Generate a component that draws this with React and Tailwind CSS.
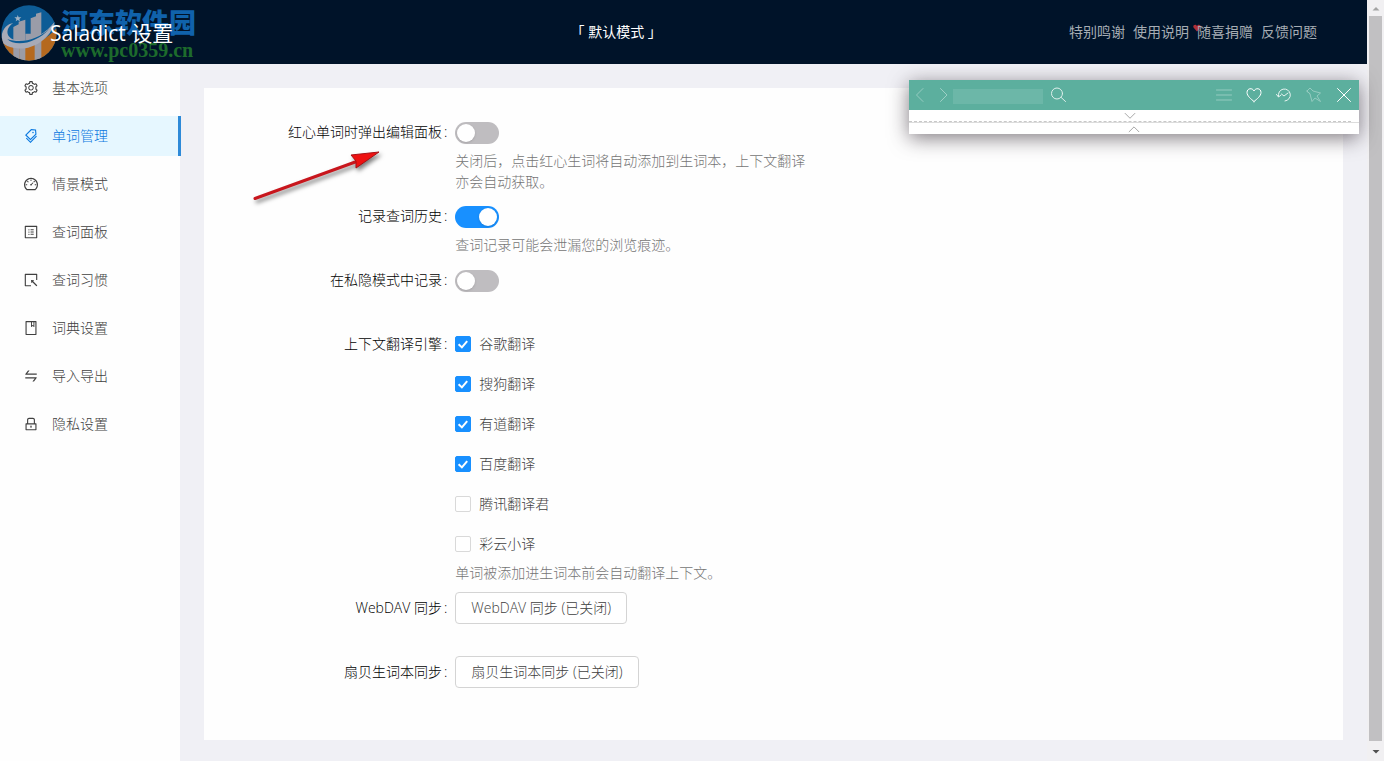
import React, { useState } from "react";
import {
  AiOutlineSetting,
  AiOutlineTags,
  AiOutlineDashboard,
  AiOutlineProfile,
  AiOutlineSelect,
  AiOutlineBook,
  AiOutlineSwap,
  AiOutlineLock,
} from "react-icons/ai";

const menu = [
  { label: "基本选项", Icon: AiOutlineSetting },
  { label: "单词管理", Icon: AiOutlineTags, active: true },
  { label: "情景模式", Icon: AiOutlineDashboard },
  { label: "查词面板", Icon: AiOutlineProfile },
  { label: "查词习惯", Icon: AiOutlineSelect },
  { label: "词典设置", Icon: AiOutlineBook },
  { label: "导入导出", Icon: AiOutlineSwap },
  { label: "隐私设置", Icon: AiOutlineLock },
];

const engines = [
  ["谷歌翻译", true],
  ["搜狗翻译", true],
  ["有道翻译", true],
  ["百度翻译", true],
  ["腾讯翻译君", false],
  ["彩云小译", false],
];

function Watermark() {
  return (
    <div className="pointer-events-none absolute left-0 top-0.5 flex items-center gap-[3px]" aria-hidden="true">
      <svg className="size-[58px] shrink-0" viewBox="0 0 174 174">
        <defs>
          <clipPath id="disc">
            <circle cx="87" cy="90" r="83" />
          </clipPath>
        </defs>
        <g clipPath="url(#disc)">
          <rect width="174" height="174" fill="#0d5c96" />
          <path d="M0 104C40 150 120 136 174 70V174H0Z" fill="#b5691f" />
          <path d="M40 72L56 64V56L76 50V174H58V136H40Z M92 46L108 40V32L124 28V174H104V112L92 116Z" fill="#9a9ca8" />
          <path d="M40 130H58V174H40Z" fill="#9a9ca8" />
          <path d="M76 92H104V112H76Z" fill="#9a9ca8" />
          <path d="M4 106C6 72 26 62 40 60C14 76 16 108 52 112C98 116 136 92 164 56C152 112 92 142 50 136C20 132 4 122 4 106Z" fill="#a8aab6" />
          <path d="M22 108C44 132 108 124 150 76C112 112 60 122 22 108Z" fill="#0d5c96" />
          <path d="M53 36l3 7 8 0-6 5 2 7-7-4-6 4 2-7-6-5 8 0z" fill="#9fb2c4" />
        </g>
      </svg>
      <div className="whitespace-nowrap pt-1">
        <div className="font-['Noto_Sans_CJK_SC',sans-serif] text-[27px] leading-8 font-black text-[#1062ab]">河东软件园</div>
        <div className="font-['Liberation_Serif',serif] text-[20px] leading-6 font-bold text-[#1d6b2c]">www.pc0359.cn</div>
      </div>
    </div>
  );
}

function Header() {
  return (
    <header className="relative flex h-16 items-center justify-between bg-[#001329] px-[50px]">
      <Watermark />
      <h1 className="relative pt-0.5 text-[21px] text-white"><span className="font-medium">Saladict</span> 设置</h1>
      <button type="button" className="mr-2.5 whitespace-pre text-sm text-white">「 默认模式 」</button>
      <nav className="flex gap-2 text-sm text-[#a6adb4]">
        <a href="#thanks">特别鸣谢</a>
        <a href="#manual">使用说明</a>
        <a href="#donate" className="relative">
          <svg className="absolute top-0.5 -left-1 size-2" viewBox="0 0 16 16">
            <path d="M8 15L1 7C-1 2 5-1 8 4C11-1 17 2 15 7Z" fill="#b03038" />
          </svg>
          <span className="relative">随喜捐赠</span>
        </a>
        <a href="#feedback">反馈问题</a>
      </nav>
    </header>
  );
}

function Sidebar() {
  return (
    <nav className="w-[181px] shrink-0 border-r border-[#f0f0f5] bg-[#fefefe] pt-1">
      <ul className="flex flex-col gap-2">
        {menu.map(({ label, Icon, active }) => (
          <li key={label} className="-mr-px">
            <a
              href="#menu"
              className={
                active
                  ? "flex h-10 items-center gap-[13px] border-r-[3px] border-[#2e8ad8] bg-[#e6f7ff] pl-[23px] text-[#0a78e0]"
                  : "flex h-10 items-center gap-[13px] pl-[23px] text-[#404040]"
              }
            >
              <Icon className="size-4" />
              {label}
            </a>
          </li>
        ))}
      </ul>
    </nav>
  );
}

function Row({ label, htmlFor, help, children }) {
  return (
    <div className={help ? "mb-1 flex" : "mb-6 flex"}>
      <label htmlFor={htmlFor} className="h-10 w-5/24 shrink-0 pr-2 text-right leading-10 whitespace-nowrap text-black">
        {label}<span className="ml-0.5">:</span>
      </label>
      <div className="w-8/24">
        {children}
        {help && <p className="-mt-0.5 min-h-[22px] leading-[21px] text-[#757575]">{help}</p>}
      </div>
    </div>
  );
}

function Switch({ id, initial = false }) {
  const [on, setOn] = useState(initial);
  return (
    <div className="flex h-10 items-center pt-0.5">
      <button
        id={id}
        type="button"
        role="switch"
        aria-checked={on}
        onClick={() => setOn(!on)}
        className={
          on
            ? "flex h-[22px] w-11 items-center justify-end rounded-full bg-[#1890ff] px-0.5"
            : "flex h-[22px] w-11 items-center rounded-full bg-[#bfbdc0] px-0.5"
        }
      >
        <span className="size-[18px] rounded-full bg-white shadow-sm" />
      </button>
    </div>
  );
}

function Check({ id, label, initial }) {
  return (
    <label className="flex h-10 items-center gap-2 text-[#404040]">
      <span className="relative flex size-4">
        <input
          id={id}
          type="checkbox"
          defaultChecked={initial}
          className="peer size-4 appearance-none rounded-xs border border-[#d9d9d9] bg-white checked:border-[#1890ff] checked:bg-[#1890ff]"
        />
        <svg className="pointer-events-none absolute inset-0 hidden size-4 peer-checked:block" viewBox="0 0 16 16" fill="none" stroke="#fff" strokeWidth="2">
          <path d="M3.6 8.2L6.9 11.4L12.2 5.2" />
        </svg>
      </span>
      {label}
    </label>
  );
}

function SyncButton({ id, children }) {
  return (
    <div className="flex h-10 items-center">
      <button id={id} type="button" className="h-8 rounded-sm border border-[#d4d4d4] bg-white px-[15px] whitespace-nowrap text-[#404040]">
        {children}
      </button>
    </div>
  );
}

function Icon({ d, className }) {
  return (
    <svg className={className} viewBox="0 0 16 16" fill="none" stroke="currentColor" strokeLinecap="round" strokeLinejoin="round">
      <path d={d} />
    </svg>
  );
}

function DictPanel() {
  return (
    <section className="absolute top-20 right-2 w-[450px] bg-white shadow-[0_4px_20px_rgba(60,50,60,0.65)]">
      <div className="flex h-[30px] items-center bg-[#5caf9e] px-[7px] text-white">
        <button type="button" aria-label="后退" className="opacity-35"><Icon className="size-4" d="M7 1.5L.5 8L7 14.5" /></button>
        <button type="button" aria-label="前进" className="ml-2 opacity-40"><Icon className="size-4" d="M.5 1.5L7 8L.5 14.5" /></button>
        <input aria-label="查词" className="-ml-[3px] mt-0.5 h-[15px] w-[90px] bg-white/10 outline-none" />
        <button type="button" aria-label="搜索" className="ml-2 opacity-80"><Icon className="size-4" d="M11.5 6.5A5.5 5.5 0 1 1 .5 6.5A5.5 5.5 0 0 1 11.5 6.5M10.2 10.5L14.5 14.5" /></button>
        <div className="ml-auto flex gap-3.5">
          <button type="button" aria-label="菜单" className="opacity-35"><Icon className="size-4" d="M.5 3H15.5M.5 8H15.5M.5 13H15.5" /></button>
          <button type="button" aria-label="收藏"><Icon className="size-4" d="M8 14.5C5 12 1 9 1 5.500C1 1 6.500 .5 8 4C9.500 .5 15 1 15 5.500C15 9 11 12 8 14.500Z" /></button>
          <button type="button" aria-label="历史" className="opacity-85"><Icon className="size-4" d="M2.500 9.500A6 6 0 1 1 9 14M.5 7.500L2.500 10L5 8M5.500 7L8 9L12 6" /></button>
          <button type="button" aria-label="固定" className="opacity-35"><Icon className="size-4" d="M1 4L4 1L7 4L14.500 6L11 9L14.500 14.500L9 11L6 14.500L4 7ZM1 4L4 7" /></button>
          <button type="button" aria-label="关闭"><Icon className="size-4" d="M1.500 1.500L14.500 14.500M14.500 1.500L1.500 14.500" /></button>
        </div>
      </div>
      <div className="mr-2 flex h-3 justify-center border-b border-dashed border-[#c8c8c8] text-[#8a8a8a]">
        <Icon className="size-3" d="M1.500 4.500L8 11L14.500 4.500" />
      </div>
      <div className="flex h-3 items-end justify-center border-t border-[#dcdcdc] text-[#8a8a8a]">
        <Icon className="size-3" d="M1.500 13L8 6.500L14.500 13" />
      </div>
    </section>
  );
}

function ScrollTrack() {
  return (
    <div className="flex w-[17px] shrink-0 flex-col items-center bg-[#f1f0f2]" aria-hidden="true">
      <svg className="h-4 w-4 shrink-0" viewBox="0 0 16 16"><path d="M4.500 10.500H11.500L8 7Z" fill="#a3a3a3" /></svg>
      <div className="w-[13px] grow bg-[#c1c0c2]" />
      <svg className="h-5 w-4 shrink-0" viewBox="0 0 16 20"><path d="M4.500 9H11.500L8 12.500Z" fill="#505050" /></svg>
    </div>
  );
}

export default function App() {
  return (
    <div className="flex min-h-screen font-['Open_Sans','Noto_Sans_CJK_SC',sans-serif] text-sm">
      <div className="relative flex min-w-0 grow flex-col">
        <Header />
        <div className="flex grow font-light">
          <Sidebar />
          <main className="min-w-0 grow bg-[#f0f0f5] py-6 pr-6 pb-5 pl-[23px]">
            <form className="relative bg-[#fefefe] p-6" onSubmit={(e) => e.preventDefault()}>
              <Row label="红心单词时弹出编辑面板" htmlFor="edit" help="关闭后，点击红心生词将自动添加到生词本，上下文翻译亦会自动获取。">
                <Switch id="edit" />
              </Row>
              <Row label="记录查词历史" htmlFor="history" help="查词记录可能会泄漏您的浏览痕迹。">
                <Switch id="history" initial />
              </Row>
              <Row label="在私隐模式中记录" htmlFor="incognito">
                <Switch id="incognito" />
              </Row>
              <Row label="上下文翻译引擎" htmlFor="engine-0" help="单词被添加进生词本前会自动翻译上下文。">
                {engines.map(([label, on], i) => (
                  <Check key={label} id={`engine-${i}`} label={label} initial={on} />
                ))}
              </Row>
              <Row label="WebDAV 同步" htmlFor="webdav">
                <SyncButton id="webdav">WebDAV 同步 (已关闭)</SyncButton>
              </Row>
              <Row label="扇贝生词本同步" htmlFor="shanbay">
                <SyncButton id="shanbay">扇贝生词本同步 (已关闭)</SyncButton>
              </Row>
              <svg className="pointer-events-none absolute top-14 left-11 h-16 w-36 drop-shadow-[2px_3px_2px_rgba(0,0,0,0.5)]" viewBox="0 0 144 64" aria-hidden="true">
                <path d="M7 54.500L110 17" stroke="#c8161d" strokeWidth="3" strokeLinecap="round" />
                <path d="M131 8L103 11L108 17L108 24Z" fill="#ee1111" stroke="#a80f14" />
              </svg>
            </form>
          </main>
        </div>
        <DictPanel />
      </div>
      <ScrollTrack />
    </div>
  );
}
